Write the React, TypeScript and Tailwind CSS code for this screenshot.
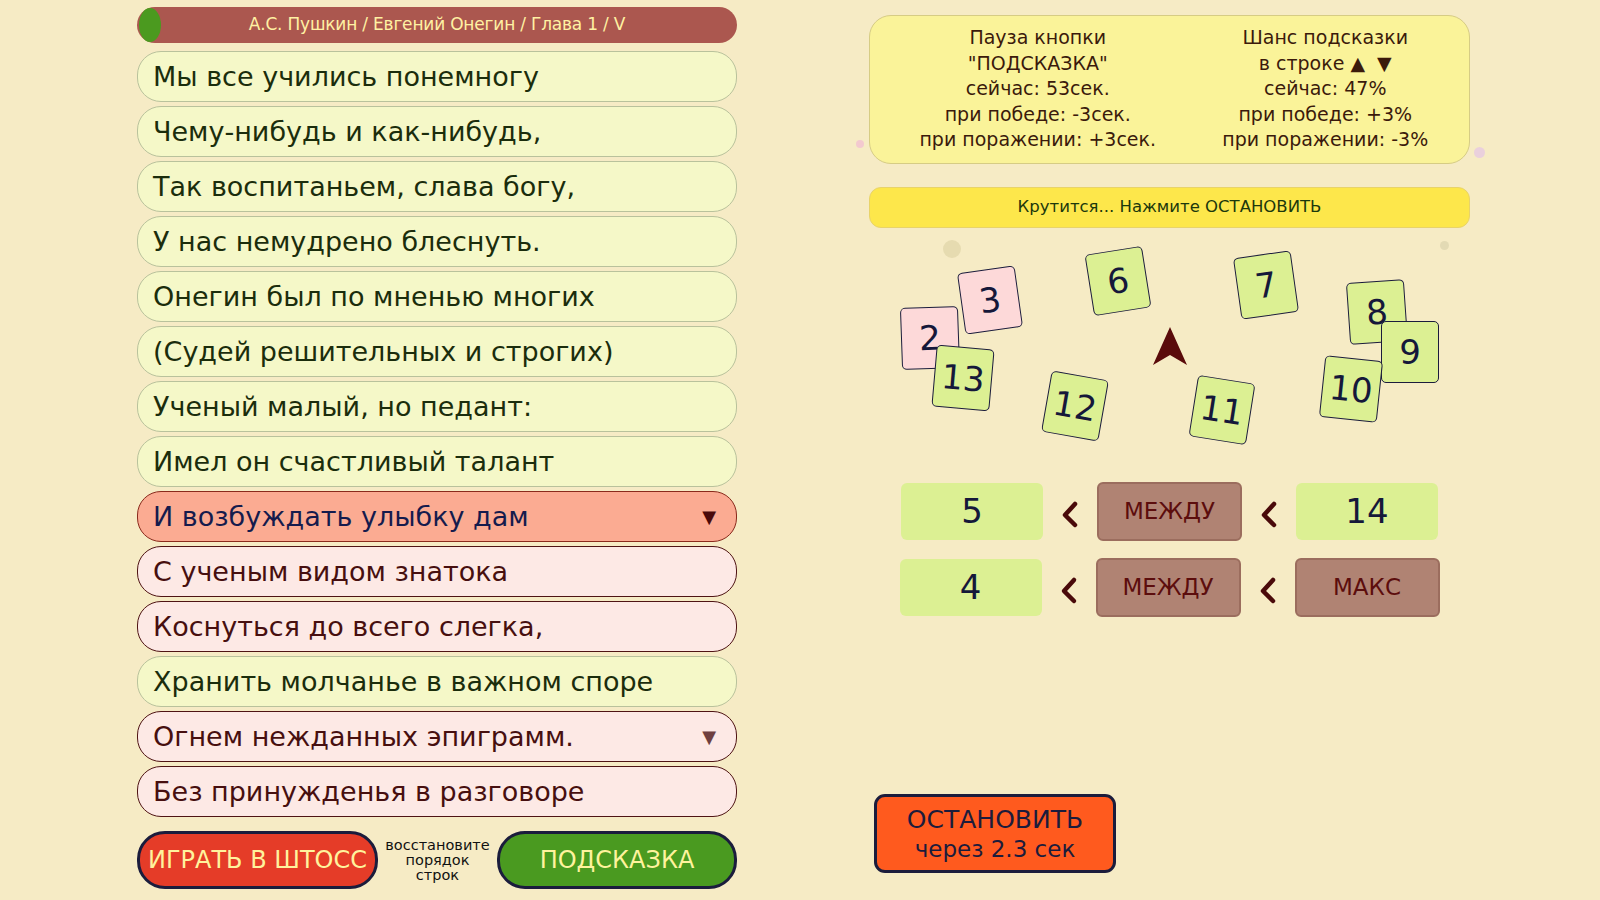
import React from 'react';

const FONT = { fontFamily: '"DejaVu Sans", "Noto Sans", sans-serif' };

type Line = { text: string; kind: 'plain' | 'active' | 'rose'; mark?: 'dark' | 'soft' };

const lines: Line[] = [
  { text: 'Мы все учились понемногу', kind: 'plain' },
  { text: 'Чему-нибудь и как-нибудь,', kind: 'plain' },
  { text: 'Так воспитаньем, слава богу,', kind: 'plain' },
  { text: 'У нас немудрено блеснуть.', kind: 'plain' },
  { text: 'Онегин был по мненью многих', kind: 'plain' },
  { text: '(Судей решительных и строгих)', kind: 'plain' },
  { text: 'Ученый малый, но педант:', kind: 'plain' },
  { text: 'Имел он счастливый талант', kind: 'plain' },
  { text: 'И возбуждать улыбку дам', kind: 'active', mark: 'dark' },
  { text: 'С ученым видом знатока', kind: 'rose' },
  { text: 'Коснуться до всего слегка,', kind: 'rose' },
  { text: 'Хранить молчанье в важном споре', kind: 'plain' },
  { text: 'Огнем нежданных эпиграмм.', kind: 'rose', mark: 'soft' },
  { text: 'Без принужденья в разговоре', kind: 'rose' },
];

const rowStyles = {
  plain: 'bg-[#f5f8c8] border-[#b9c29c] text-[#1b2d0c]',
  active: 'bg-[#fbab92] border-[#8a2a1c] text-[#151b4d]',
  rose: 'bg-[#fde9e5] border-[#4f1414] text-[#470f0f]',
};

// cards scattered on the wheel: centre x/y inside the canvas, tilt in degrees
const cards = [
  { n: 2, x: 61, y: 110, r: -2, pink: true },
  { n: 3, x: 121, y: 72, r: -8, pink: true },
  { n: 13, x: 94, y: 150, r: 5 },
  { n: 6, x: 249, y: 53, r: -9 },
  { n: 7, x: 397, y: 57, r: -8 },
  { n: 8, x: 508, y: 84, r: -4 },
  { n: 9, x: 541, y: 124, r: 0 },
  { n: 10, x: 482, y: 161, r: 6 },
  { n: 11, x: 353, y: 182, r: 9 },
  { n: 12, x: 206, y: 178, r: 10 },
];

function Chevron() {
  return (
    <svg width="22" height="30" viewBox="0 0 22 30" className="mx-[16px] mt-[4px]">
      <path d="M16 5 L6 16 L16 26" fill="none" stroke="#4a0a0a" strokeWidth="4.5" strokeLinecap="round" strokeLinejoin="round" />
    </svg>
  );
}

function ValueBox({ children }: { children: React.ReactNode }) {
  return (
    <div className="w-[142px] h-[57px] rounded-md bg-[#dcf093] flex items-center justify-center text-[34px] text-[#15183a]">
      {children}
    </div>
  );
}

function SlotBox({ children }: { children: React.ReactNode }) {
  return (
    <div className="w-[145px] h-[59px] rounded-md bg-[#b08373] border-2 border-[#9b6d5e] flex items-center justify-center text-[23px] text-[#5c0d0d]">
      {children}
    </div>
  );
}

export default function App() {
  return (
    <div className="relative w-[1600px] h-[900px] overflow-hidden bg-[#f6ebc5] flex" style={FONT}>
      {/* faint bubbles in the background */}
      <div className="absolute left-[943px] top-[240px] w-[18px] h-[18px] rounded-full bg-[#e6dbb0]" />
      <div className="absolute left-[1440px] top-[241px] w-[9px] h-[9px] rounded-full bg-[#e3dab4]" />
      <div className="absolute left-[856px] top-[140px] w-[8px] h-[8px] rounded-full bg-[#f3c9cf]" />
      <div className="absolute left-[1474px] top-[147px] w-[11px] h-[11px] rounded-full bg-[#ead0dc]" />

      {/* poem column */}
      <div className="ml-[137px] mt-[7px] w-[600px] flex flex-col">
        <div className="relative h-[36px] rounded-full bg-[#ab574f] flex items-center justify-center">
          <div className="absolute left-[2px] top-[1px] w-[22px] h-[34px] rounded-[50%] bg-[#4b9a1f]" />
          <span className="text-[17px] text-[#fff1a3] tracking-[-0.2px]">А.С. Пушкин / Евгений Онегин / Глава 1 / V</span>
        </div>

        <div className="mt-[8px] flex flex-col gap-[4px]">
          {lines.map((l, i) => (
            <div
              key={i}
              className={`h-[51px] rounded-[24px] border-[1.5px] flex items-center justify-between pl-[15px] pr-[20px] ${rowStyles[l.kind]}`}
            >
              <span className="text-[27px] leading-none whitespace-nowrap">{l.text}</span>
              {l.mark && (
                <span className={`text-[18px] ${l.mark === 'dark' ? 'text-[#4a0a0a]' : 'text-[#6e3f3f]'}`}>▼</span>
              )}
            </div>
          ))}
        </div>

        <div className="mt-[14px] h-[58px] flex items-center">
          <button className="w-[241px] h-[58px] rounded-[28px] bg-[#e53c28] border-[3px] border-[#1b1c3c] text-[24px] text-[#fff39d]">
            ИГРАТЬ В ШТОСС
          </button>
          <div className="flex-1 flex flex-col items-center text-[14.5px] leading-[15px] text-[#111]">
            <span>восстановите</span>
            <span>порядок</span>
            <span>строк</span>
          </div>
          <button className="w-[240px] h-[58px] rounded-[28px] bg-[#4a9a20] border-[3px] border-[#1b1c3c] text-[24px] text-[#fff39d]">
            ПОДСКАЗКА
          </button>
        </div>
      </div>

      {/* game side */}
      <div className="ml-[132px] mt-[15px] w-[601px] flex flex-col">
        <div className="h-[149px] rounded-[22px] bg-[#faf399] border border-[#d6cc84] grid grid-cols-2 items-start pt-[9px] pl-[24px] text-[19px] leading-[25.5px] text-[#3b1a0b] text-center">
          <div className="flex flex-col">
            <span>Пауза кнопки</span>
            <span>"ПОДСКАЗКА"</span>
            <span>сейчас: 53сек.</span>
            <span>при победе: -3сек.</span>
            <span>при поражении: +3сек.</span>
          </div>
          <div className="flex flex-col">
            <span>Шанс подсказки</span>
            <span>в строке ▲ &nbsp;▼</span>
            <span>сейчас: 47%</span>
            <span>при победе: +3%</span>
            <span>при поражении: -3%</span>
          </div>
        </div>

        <div className="mt-[23px] h-[41px] rounded-[12px] bg-[#fde74b] border border-[#e8d36a] flex items-center justify-center text-[16.5px] text-[#1c380c]">
          Крутится... Нажмите ОСТАНОВИТЬ
        </div>

        {/* wheel canvas */}
        <div className="relative h-[254px]">
          {cards.map((c) => (
            <div
              key={c.n}
              className={`absolute w-[58px] h-[62px] -ml-[29px] -mt-[31px] rounded-[5px] border-[1.5px] border-[#1b1c3c] flex items-center justify-center text-[34px] text-[#15183a] ${
                c.pink ? 'bg-[#fdd9d9]' : 'bg-[#dcf093]'
              }`}
              style={{ left: c.x, top: c.y, transform: `rotate(${c.r}deg)` }}
            >
              {c.n}
            </div>
          ))}
          <svg className="absolute left-[284px] top-[99px]" width="34" height="38" viewBox="0 0 34 38">
            <polygon points="17,0 34,38 17,28 0,38" fill="#5a0b0b" />
          </svg>
        </div>

        <div className="flex flex-col gap-[17px]">
          <div className="flex items-center justify-center">
            <ValueBox>5</ValueBox>
            <Chevron />
            <SlotBox>МЕЖДУ</SlotBox>
            <Chevron />
            <ValueBox>14</ValueBox>
          </div>
          <div className="flex items-center justify-center">
            <ValueBox>4</ValueBox>
            <Chevron />
            <SlotBox>МЕЖДУ</SlotBox>
            <Chevron />
            <SlotBox>МАКС</SlotBox>
          </div>
        </div>

        <button className="mt-[177px] ml-[5px] w-[242px] h-[79px] rounded-[11px] bg-[#ff5a1e] border-[3px] border-[#1b1c3c] flex flex-col items-center justify-center text-[#1b1c3c]">
          <span className="text-[25px] leading-[31px]">ОСТАНОВИТЬ</span>
          <span className="text-[23px] leading-[28px]">через 2.3 сек</span>
        </button>
      </div>
    </div>
  );
}
